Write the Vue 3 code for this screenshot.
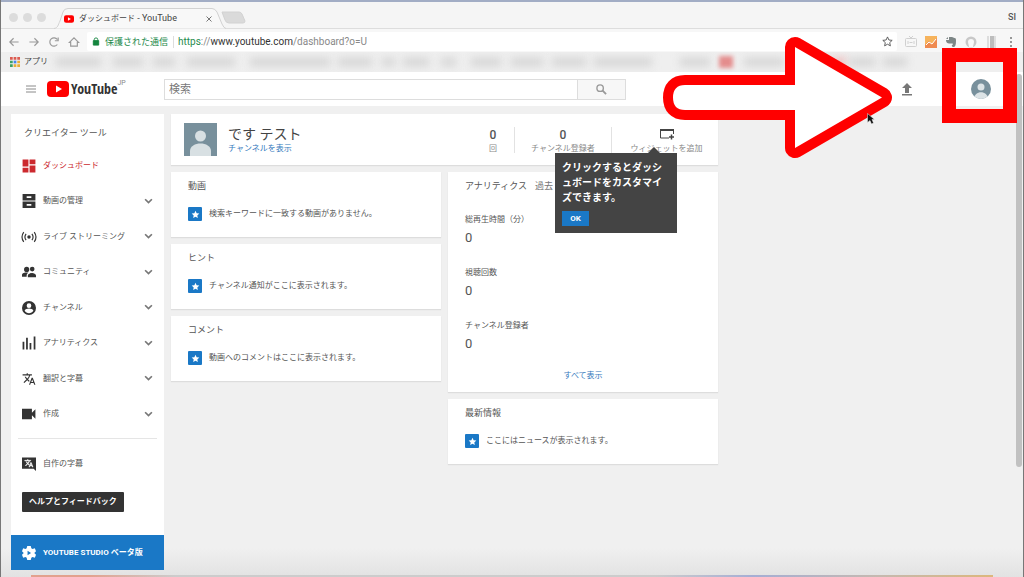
<script setup>
const bookmarks = [
  [45, 8], [30, 12], [22, 10], [48, 12], [80, 15], [34, 8], [13, 10], [26, 8], [15, 12],
  [30, 15], [32, 10], [34, 9], [58, 8], [30, 28], [14, 9, 'red'], [40, 11], [30, 20], [12, 0, 'pink'], [26, 3], [24, 8],
].map(([width, gap, tone]) => ({ width: width + 'px', marginLeft: gap + 'px', tone: tone || 'grey' }))

const menu = [
  { label: 'ダッシュボード', icon: 'M1 13h10V1H1zM1 23h10v-8H1zM13 23h10V11H13zM13 1v8h10V1z', kind: 'dash' },
  { label: '動画の管理', icon: 'M1 0h22v11H1zM1 13h22v11H1zM8 4v3h8V4zM8 17v3h8v-3z' },
  { label: 'ライブ ストリーミング', kind: 'live' },
  { label: 'コミュニティ', icon: 'M8 3a4.500 4.500 0 1 1 0 9 4.500 4.500 0 0 1 0-9zM17.500 3a4 4 0 1 1 0 8 4 4 0 0 1 0-8zM0 20v-3c0-3 5-4 8-4 1 0 2 .1 3 .4-2 1.300-3 2.600-3 4.600v2zM10 21v-3c0-3 5-4.500 7.500-4.500S24 15 24 18v3z' },
  { label: 'チャンネル', icon: 'M12 0a12 12 0 1 0 0 24 12 12 0 0 0 0-24zm0 4a4 4 0 1 1 0 8 4 4 0 0 1 0-8zm0 17c-3.200 0-5.900-1.600-7.500-4.100.1-2.500 5-3.900 7.500-3.900s7.400 1.400 7.500 3.900C17.900 19.400 15.200 21 12 21z' },
  { label: 'アナリティクス', icon: 'M1 10h3v13H1zM7 3h3v20H7zM13 12h3v11h-3zM20 1h3v22h-3z' },
  { label: '翻訳と字幕', icon: 'M12.870 15.070l-2.540-2.510.03-.03A17.520 17.520 0 0 0 14.070 6H17V4h-7V2H8v2H1v1.990h11.170C11.500 7.920 10.440 9.750 9 11.350 8.070 10.320 7.300 9.190 6.690 8h-2c.73 1.630 1.730 3.170 2.980 4.560l-5.090 5.020L4 19l5-5 3.110 3.110zM18.500 10h-2L12 22h2l1.120-3h4.750L21 22h2zm-2.620 7l1.620-4.330L19.120 17z' },
  { label: '作成', icon: 'M0 3h17v7l6-6v16l-6-6v7H0z' },
]
const leftCards = [
  { title: '動画', text: '検索キーワードに一致する動画がありません。' },
  { title: 'ヒント', text: 'チャンネル通知がここに表示されます。' },
  { title: 'コメント', text: '動画へのコメントはここに表示されます。' },
]
const metrics = ['総再生時間（分）', '視聴回数', 'チャンネル登録者']
const star = 'M12 2l3 6.700 7.200.8-5.400 4.900 1.500 7.100L12 17.900l-6.300 3.600 1.500-7.100L1.800 9.500 9 8.700z'
</script>

<template>
  <div class="window">
    <div class="tabs">
      <i class="light"></i><i class="light"></i><i class="light"></i>
      <div class="tab">
        <svg class="tab-shape" viewBox="0 0 172 21" preserveAspectRatio="none"><path d="M0 20.500C4 20 4 17 6 13L9 4Q10 .5 14 .5H158Q161 .5 163 4L168 16Q170 20.500 172 20.500" fill="#f8f8f8" stroke="#d2d2d2" /></svg>
        <svg class="fav" viewBox="0 0 24 18"><rect width="24" height="18" rx="5" fill="#f00" /><path d="M9.500 5v8l7-4z" fill="#fff" /></svg>
        <span class="tab-title">ダッシュボード<b> - YouTube</b></span>
        <button class="close" aria-label="閉じる"><svg viewBox="0 0 8 8"><path d="M1.500 1.500l5 5m0-5l-5 5" stroke="#777" /></svg></button>
      </div>
      <svg class="newtab" viewBox="0 0 25 13"><path d="M1 1h17q2 0 3 2l3 7q0 2-2 2H8q-3 0-4-3z" fill="#dadada" stroke="#d2d2d2" /></svg>
      <span class="user">SI</span>
    </div>

    <div class="toolbar">
      <nav class="nav">
        <button aria-label="戻る"><svg viewBox="0 0 12 12"><path d="M11.500 6H1M5.500 1.500L1 6l4.500 4.500" /></svg></button>
        <button aria-label="進む"><svg viewBox="0 0 12 12"><path d="M.5 6H11M6.500 1.500L11 6l-4.500 4.500" /></svg></button>
        <button aria-label="再読み込み"><svg viewBox="0 0 12 12"><path d="M10 9A5 5 0 1 1 10 3M7 4.500h4V.5" /></svg></button>
        <button aria-label="ホーム"><svg viewBox="0 0 12 12"><path d="M.5 6.500L6 1l5.500 5.500H10V11H2V6.500z" /></svg></button>
      </nav>
      <div class="address">
        <svg class="lock" viewBox="0 0 8 10"><path d="M1 4h6v5H1z" fill="#14853e" stroke="#14853e" /><path d="M2 4V3a2 2 0 0 1 4 0v1" fill="none" stroke="#14853e" /></svg>
        <span class="secure">保護された通信</span>
        <span class="url"><em>https</em>://<strong>www.youtube.com</strong>/dashboard?o=U</span>
        <button class="bm" aria-label="ブックマーク"><svg viewBox="0 0 24 24"><path :d="star" fill="none" stroke="#555" stroke-width="2" /></svg></button>
      </div>
      <div class="ext">
        <svg viewBox="0 0 12 12" fill="none" stroke="#d0d0d0"><rect x=".5" y="2.500" width="11" height="8" rx="1" /><path d="M4 0l2 2 2-2M3 5v3m6-3v3M4.500 6.500h3" /></svg>
        <svg viewBox="0 0 12 12"><path d="M0 0h12v12H0z" fill="#f6b35c" /><path d="M0 9l4-4 3 3 5-6v10H0z" fill="#ef8a50" /><path d="M1 9l3-3 3 2 4-5" fill="none" stroke="#fff" /></svg>
        <svg viewBox="0 0 12 12"><path d="M4 1h3c1 0 1.500.8 2.500 1C11 2 11 3 11 5c0 4-.8 6-2.500 6S6 9 8 8.500C8 7 7 7.500 6 7.500 3 7.500 1 7 1 4h3z" fill="#7d8686" /><path d="M1 3l2-2v2z" fill="#7d8686" /></svg>
        <svg viewBox="0 0 12 12"><circle cx="6" cy="6" r="5.500" fill="#c8c8c8" /><path d="M3 6a3 3 0 0 1 6 0l-1 5H4z" fill="#f8f8f8" /></svg>
        <svg viewBox="0 0 12 12"><path d="M2 0h2v12H2z" fill="#ddd" /><path d="M5 0h4v12H5z" fill="#bdbdbd" /><path d="M9 0h2v12H9z" fill="#dedede" /></svg>
        <svg viewBox="0 0 12 12" fill="#777"><circle cx="6" cy="2" r="1" /><circle cx="6" cy="6" r="1" /><circle cx="6" cy="10" r="1" /></svg>
      </div>
    </div>

    <div class="bookmarks">
      <svg class="apps" viewBox="0 0 11 11"><path d="M0 0h3v3H0zM4 0h3v3H4zM8 0h3v3H8z" fill="#dc5b50" /><path d="M0 4h3v3H0zM0 8h3v3H0z" fill="#3da162" /><path d="M4 4h3v3H4z" fill="#4886ec" /><path d="M8 4h3v3H8zM4 8h3v3H4zM8 8h3v3H8z" fill="#e9ad37" /></svg>
      <span class="apps-label">アプリ</span>
      <i v-for="(b, i) in bookmarks" :key="i" class="blob" :class="b.tone" :style="{ width: b.width, marginLeft: b.marginLeft }"></i>
    </div>

    <header class="masthead">
      <button class="burger" aria-label="メニュー"><svg viewBox="0 0 10 8"><path d="M0 1h10M0 4h10M0 7h10" stroke="#8a8a8a" /></svg></button>
      <a class="logo" href="#">
        <svg viewBox="0 0 22 16"><rect width="22" height="16" rx="4" fill="#f00" /><path d="M9 4.500v7L15 8z" fill="#fff" /></svg>
        <span>YouTube</span><sup>JP</sup>
      </a>
      <form class="search" @submit.prevent>
        <input type="text" placeholder="検索" aria-label="検索" />
        <button aria-label="検索する"><svg viewBox="0 0 12 12" fill="none" stroke="#999"><circle cx="4.500" cy="4.500" r="3.500" stroke-width="1.500" /><path d="M7 7l4 4" stroke-width="2" /></svg></button>
      </form>
      <button class="upload" aria-label="アップロード"><svg viewBox="0 0 14 14" fill="#777"><path d="M7 1l5 5H9v5H5V6H2zM2 12h10v1.500H2z" /></svg></button>
      <button class="me" aria-label="アカウント"><svg viewBox="0 0 20 20"><defs><clipPath id="round"><circle cx="10" cy="10" r="10" /></clipPath></defs><g clip-path="url(#round)"><path d="M0 0h20v20H0z" fill="#78909c" /><circle cx="10" cy="8" r="3.500" fill="#dce3e6" /><path d="M3 20c0-9 14-9 14 0z" fill="#dce3e6" /></g></svg></button>
    </header>

    <div class="body">
      <aside class="side">
        <h2>クリエイター ツール</h2>
        <ul>
          <li v-for="m in menu" :key="m.label">
            <a href="#" :class="{ on: m.kind === 'dash' }">
              <svg v-if="m.kind === 'live'" class="ico" viewBox="0 0 24 24" fill="none" stroke="#333" stroke-width="2"><circle cx="12" cy="12" r="3" fill="#333" stroke="none" /><path d="M7 6.500q-4 5.500 0 11M17 6.500q4 5.500 0 11M3 3.500q-6 8.500 0 17M21 3.500q6 8.500 0 17" /></svg>
              <svg v-else class="ico" viewBox="0 0 24 24" fill="currentColor" fill-rule="evenodd"><path :d="m.icon" /></svg>
              <span>{{ m.label }}</span>
              <svg v-if="m.kind !== 'dash'" class="chev" viewBox="0 0 8 6"><path d="M1 1l3 3 3-3" fill="none" stroke="#777" stroke-width="1.500" /></svg>
            </a>
          </li>
        </ul>
        <a class="own" href="#">
          <svg class="ico" viewBox="0 0 24 24"><path d="M0 1h24v23l-4-4H0z" fill="#333" /><g transform="translate(4 3) scale(.65)" fill="#fff" stroke="#fff"><path :d="menu[6].icon" /></g></svg>
          <span>自作の字幕</span>
        </a>
        <button class="help">ヘルプとフィードバック</button>
        <a class="studio" href="#">
          <svg viewBox="0 0 24 24"><path d="M9 0h6l1 4 2 1 4-1 2 5-3 3 3 3-2 5-4-1-2 1-1 4H9l-1-4-2-1-4 1-2-5 3-3-3-3 2-5 4 1 2-1z" fill="#fff" /><path d="M9.500 8v8l6-4z" fill="#1a78c6" /></svg>
          <span>YOUTUBE STUDIO ベータ版</span>
        </a>
      </aside>

      <main class="main">
        <section class="card channel">
          <svg class="avatar" viewBox="0 0 33 33"><path d="M0 0h33v33H0z" fill="#78909c" /><circle cx="16.500" cy="13" r="5.500" fill="#d8e0e3" /><path d="M6 33v-5c0-10 21-10 21 0v5z" fill="#d8e0e3" /></svg>
          <div class="who"><h1>です テスト</h1><a href="#">チャンネルを表示</a></div>
          <div class="stat first"><b>0</b><span>回</span></div>
          <div class="stat mid"><b>0</b><span>チャンネル登録者</span></div>
          <button class="stat widget">
            <svg viewBox="0 0 16 12"><path d="M10 10H1.500V1.500h13V6" fill="none" stroke="#444" /><path d="M1 1h14v2H1z" fill="#444" /><path d="M10 9h5m-2.500-2.500v5" stroke="#444" stroke-width="1.500" /></svg>
            <span>ウィジェットを追加</span>
          </button>
          <div class="tip">
            <p>クリックするとダッシュボードをカスタマイズできます。</p>
            <button>OK</button>
          </div>
        </section>
        <div class="cols">
          <div class="col">
            <section v-for="c in leftCards" :key="c.title" class="card note">
              <h3>{{ c.title }}</h3>
              <p><i class="star"><svg viewBox="0 0 24 24"><path :d="star" fill="#fff" /></svg></i>{{ c.text }}</p>
            </section>
          </div>
          <div class="col">
            <section class="card analytics">
              <h3>アナリティクス<span>過去</span></h3>
              <dl v-for="m in metrics" :key="m"><dt>{{ m }}</dt><dd>0</dd></dl>
              <a href="#">すべて表示</a>
            </section>
            <section class="card note">
              <h3>最新情報</h3>
              <p><i class="star"><svg viewBox="0 0 24 24"><path :d="star" fill="#fff" /></svg></i>ここにはニュースが表示されます。</p>
            </section>
          </div>
        </div>
      </main>
    </div>

    <div class="thumb"></div>
    <div class="dock"></div>
    <svg class="arrow" viewBox="0 0 232 124"><path d="M134 11L221 61.500 134 112V74H24Q12 74 12 61.500T24 49H134z" fill="#fff" stroke="#f00" stroke-width="20" stroke-linejoin="round" paint-order="stroke" /></svg>
    <div class="frame"></div>
    <svg class="cursor" viewBox="0 0 8 12"><path d="M.5.5v9L3 7.500l1.500 3.500 2-1L5 6.500h2.500z" fill="#111" stroke="#eee" stroke-width=".5" /></svg>
  </div>
</template>

<style>
body { margin: 0; overflow: hidden; }
</style>

<style scoped>
* { box-sizing: border-box; }
.window {
  position: relative; display: flex; flex-direction: column; height: 100vh; overflow: hidden;
  background: linear-gradient(#f0f0f0 95%, #e2e2e2); border: solid #777; border-width: 0 1px;
  font: 8px/12px Roboto, "Noto Sans CJK JP", sans-serif; color: #555;
}
button { font: inherit; color: inherit; border: 0; padding: 0; background: none; display: block; }
svg { display: block; overflow: visible; }
a { text-decoration: none; color: #3479bd; }
h1, h2, h3, p, ul, dl, dd { margin: 0; padding: 0; font-weight: 400; list-style: none; }

.tabs { display: flex; align-items: center; height: 29px; padding: 4px 7px 0 8px; background: #f5f5f5; border-top: 2px solid #a2adc5; border-bottom: 1px solid #ddd; }
.light { width: 9px; height: 9px; margin-right: 5px; border-radius: 50%; background: #dcdcdc; }
.tab { position: relative; display: flex; align-items: center; width: 172px; height: 21px; margin-left: 3px; padding: 0 13px 0 10px; align-self: flex-end; margin-bottom: -1px; }
.tab-shape { position: absolute; inset: 0; width: 100%; height: 100%; }
.fav { position: relative; width: 10px; height: 8px; margin-right: 5px; }
.tab-title { position: relative; color: #444; flex: 1; }
.tab-title b { font-size: 9px; font-weight: 400; }
.close { position: relative; width: 8px; height: 8px; }
.newtab { width: 25px; height: 13px; margin-left: -5px; }
.user { margin-left: auto; font-size: 9px; font-weight: 500; }

.toolbar { display: flex; align-items: center; height: 23px; padding: 2px 6px 0 8px; background: #f7f7f7; }
.nav, .ext { display: flex; gap: 10px; }
.nav svg { width: 10px; height: 10px; fill: none; stroke: #999; stroke-width: 1.4; }
.ext { gap: 8px; }
.ext svg { width: 12px; height: 12px; }
.address { display: flex; align-items: center; flex: 1; height: 19px; margin: 0 8px; padding: 0 4px 0 5px; background: #fff; border-radius: 2px; }
.lock { width: 8px; height: 9px; margin-right: 5px; }
.secure { font-size: 9px; color: #268b4d; padding-right: 5px; border-right: 1px solid #ddd; margin-right: 4px; }
.url { font-size: 10px; flex: 1; color: #888; }
.url em { font-style: normal; color: #268b4d; }
.url strong { font-weight: 400; color: #333; }
.bm svg { width: 11px; height: 11px; }

.bookmarks { display: flex; align-items: center; height: 20px; padding-left: 9px; background: #efefef; overflow: hidden; }
.apps { width: 10px; height: 10px; flex: none; }
.apps-label { margin-left: 4px; color: #444; white-space: nowrap; }
.blob { flex: none; height: 8px; background: #d4d4d4; filter: blur(4px); }
.blob.red { height: 12px; background: #e48d8d; filter: blur(2px); }
.blob.pink { background: #efb5b5; }

.masthead { display: flex; align-items: center; height: 34px; padding: 0 32px 0 25px; background: #fff; flex: none; }
.burger svg { width: 10px; height: 8px; }
.logo { display: flex; align-items: center; width: 117px; margin-left: 11px; color: #333; }
.logo svg { width: 22px; height: 16px; margin-right: 2px; }
.logo span { font: 700 14px/20px "Liberation Sans Narrow", "Open Sans Condensed", Roboto, sans-serif; }
.logo sup { font-size: 7px; line-height: 8px; color: #888; align-self: flex-start; vertical-align: baseline; }
.search { display: flex; flex: 1; max-width: 462px; height: 21px; }
.search input { flex: 1; min-width: 0; font: 11px/16px Roboto, "Noto Sans CJK JP", sans-serif; padding: 1px 4px 0; border: 1px solid #ddd; border-radius: 0; outline: 0; background: #fff; }
.search input::placeholder { color: #777; opacity: 1; }
.search button { display: grid; place-items: center; width: 48px; border: 1px solid #ddd; border-left: 0; background: #f7f7f7; }
.search svg { width: 11px; height: 11px; }
.upload { margin-left: auto; margin-right: 57px; }
.upload svg { width: 14px; height: 14px; }
.me svg { width: 20px; height: 20px; }

.body { display: flex; align-items: flex-start; gap: 7px; padding: 8px 10px 0; }
.side { width: 153px; background: #fff; flex: none; }
.side h2 { font-size: 9px; line-height: 13px; padding: 13px 13px 8px; }
.side ul { display: grid; grid-template-rows: repeat(8, 1fr); height: 284px; }
.side li { display: grid; }
.side li a, .own { display: flex; align-items: center; padding: 0 11px; color: #555; }
.ico { width: 14px; height: 14px; margin-right: 7px; color: #333; }
.side .on, .side .on .ico { color: #cc292e; }
.chev { width: 9px; height: 7px; margin-left: auto; }
.own { margin: 6px 7px 0; padding: 0 4px; height: 51px; border-top: 1px solid #e5e5e5; }
.help { height: 20px; margin: 3px 11px 23px; padding: 0 7px; background: #333; color: #fff; font-weight: 700; border-radius: 1px; }
.studio { display: flex; align-items: center; gap: 7px; height: 35px; padding: 0 11px; background: #1a78c6; color: #fff; font-weight: 700; }
.studio svg { width: 14px; height: 14px; }

.main { flex: 1; max-width: 547px; display: flex; flex-direction: column; gap: 7px; }
.card { background: #fff; box-shadow: 0 1px 1px #ddd; }
.channel { position: relative; display: flex; align-items: center; height: 51px; padding-left: 13px; }
.avatar { width: 33px; height: 33px; }
.who { flex: 1; margin-left: 11px; }
.who h1 { font-size: 14px; line-height: 18px; color: #444; }
.who a { display: block; line-height: 12px; }
.stat { display: flex; flex-direction: column; align-items: center; justify-content: space-between; height: 26px; color: #888; white-space: nowrap; }
.stat b { font-size: 12px; line-height: 16px; font-weight: 500; color: #555; }
.stat span { line-height: 8px; }
.first { width: 42px; }
.mid { width: 98px; border: solid #e2e2e2; border-width: 0 1px; }
.widget { width: 106px; padding: 1px 0 0 3px; }
.widget svg { width: 16px; height: 12px; }
.tip { position: absolute; z-index: 2; right: 41px; top: 39px; width: 122px; height: 80px; padding: 7px; background: #444; color: #fff; }
.tip::before { content: ""; position: absolute; top: -6px; left: 93px; border: 6px solid transparent; border-width: 0 6px 6px; border-bottom-color: #444; }
.tip p { font-size: 10px; line-height: 15px; font-weight: 700; word-break: break-all; line-break: anywhere; }
.tip button { width: 27px; height: 15px; margin-top: 6px; background: #1a78c6; font-weight: 700; }
.cols { display: grid; grid-template-columns: 1fr 1fr; gap: 7px; }
.col { display: flex; flex-direction: column; gap: 7px; }
.note { height: 65px; padding: 7px 17px; }
.card h3 { font-size: 9px; line-height: 14px; }
.card h3 span { margin-left: 8px; color: #777; }
.note p { display: flex; align-items: center; gap: 7px; margin-top: 14px; }
.star { display: grid; place-items: center; width: 14px; height: 14px; background: #1a78c6; border-radius: 1px; }
.star svg { width: 9px; height: 9px; }
.analytics { height: 220px; padding: 7px 17px; }
.analytics dl { height: 53px; padding-top: 21px; }
.analytics dd { font-size: 13px; line-height: 20px; margin-top: 2px; }
.analytics a { display: block; margin-top: 18px; text-align: center; }

.thumb { position: absolute; right: 1px; top: 74px; width: 6px; height: 393px; border-radius: 3px; background: #c1c1c1; }
.dock { position: absolute; left: 30px; right: 30px; bottom: 0; height: 2px; background: linear-gradient(90deg, #e2a18e, #e2a18e 6%, #ccc 15%, #ccc 65%, #a5aed4 75%, #c5b9b0 88%, #dcb77c); }
.arrow { position: absolute; left: 660px; top: 36px; width: 232px; height: 124px; }
.frame { position: absolute; right: 6px; top: 48px; width: 75px; height: 75px; border: 14px solid #f00; }
.cursor { position: absolute; left: 866px; top: 113px; width: 8px; height: 12px; }
</style>
